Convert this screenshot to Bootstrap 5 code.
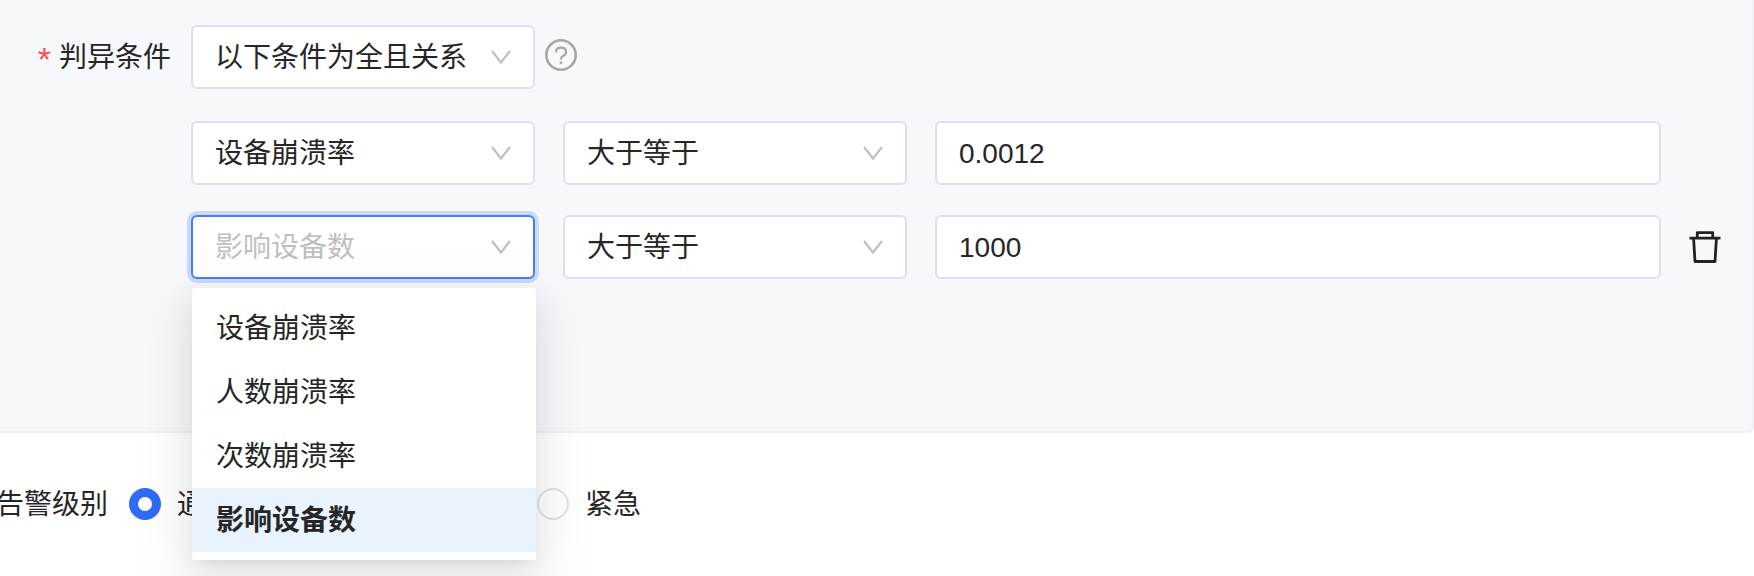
<!DOCTYPE html>
<html lang="zh-CN">
<head>
<meta charset="utf-8">
<meta name="viewport" content="width=device-width, initial-scale=1">
<title>告警条件</title>
<link href="https://cdn.jsdelivr.net/npm/bootstrap@5.3.0/dist/css/bootstrap.min.css" rel="stylesheet">
<style>
  body {
    font-family: "Liberation Sans", "Noto Sans CJK SC", sans-serif;
    font-size: 28px;
    line-height: 44px;
    color: #262626;
    background: #fff;
    min-height: 100vh;
  }
  .rule-panel {
    background: #f6f8fc;
    border: 2px solid #f0f0f0;
    border-width: 0 2px 2px 0;
    border-bottom-right-radius: 6px;
    padding: 25px 31px 152px 0;
  }
  .rule-label { width: 171px; margin-right: 20px; padding-top: 2px; }
  .required-mark { color: #ff4d4f; margin-right: 8px; font-size: 34px; line-height: 28px; vertical-align: -4px; }
  .rule-fields { gap: 28px; }
  .rule-row + .rule-row { margin-top: 30px; }
  .rule-row + .first-rule { margin-top: 32px; }
  .pick-box { flex: 0 0 344px; }
  .rule-panel .form-select,
  .rule-panel .form-control {
    height: 64px;
    padding: 2px 22px 0;
    border: 2px solid #dce2ed;
    border-radius: 6px;
    font-size: 28px;
    line-height: 44px;
    color: #262626;
    background-color: #fff;
  }
  .rule-panel .form-select {
    padding-right: 56px;
    background-image: url("data:image/svg+xml,%3Csvg xmlns='http://www.w3.org/2000/svg' viewBox='0 0 20 14'%3E%3Cpath d='M1 1 10 12.500 19 1' fill='none' stroke='%23bfbfbf' stroke-width='2.200'/%3E%3C/svg%3E");
    background-size: 20px 14px;
    background-position: right 22px center;
  }
  .rule-panel .form-select.is-open {
    color: #bfbfbf;
    border-color: #407fff;
    box-shadow: 0 0 0 4px #ced9f9;
  }
  .help-btn { width: 32px; height: 32px; margin: 14px 0 18px 10px; }
  .trash-slot { flex: 0 0 32px; }
  .trash-slot svg, .help-btn svg { display: block; }
  .pick-menu {
    top: 73px;
    left: 1px;
    width: 100%;
    padding: 8px 0;
    border: 0;
    border-radius: 4px;
    font-size: 28px;
    box-shadow: 0 6px 12px -8px rgba(0,0,0,.12), 0 12px 32px rgba(0,0,0,.08), 0 18px 56px 16px rgba(0,0,0,.05);
  }
  .pick-menu .dropdown-item {
    padding: 11px 24px 9px;
    line-height: 44px;
    color: #262626;
  }
  .pick-menu .dropdown-item.active {
    background: #e8f3fe;
    font-weight: 700;
  }
  .level-row { padding: 48px 0 51px; }
  .level-label { width: 108px; margin-right: 21px; }
  .level-label, .level-option label { padding-top: 2px; }
  .level-option { width: 104px; gap: 16px; }
  .level-options { gap: 304px; }
  .level-option .form-check-input {
    width: 32px;
    height: 32px;
    margin: 0;
    border: 2px solid #dce2ed;
    background-image: none;
  }
  .level-option .form-check-input:checked {
    border: 9px solid #2f6bf6;
    background: #fff;
  }
</style>
</head>
<body>
<form>
  <section class="rule-panel">
    <div class="rule-row d-flex align-items-center">
      <label class="rule-label text-end text-nowrap" for="relation"><span class="required-mark">*</span>判异条件</label>
      <div class="pick-box">
        <select class="form-select" id="relation"><option>以下条件为全且关系</option></select>
      </div>
      <button class="help-btn btn p-0 border-0" type="button" aria-label="帮助">
        <svg width="32" height="32" viewBox="0 0 32 32" fill="none" stroke="#a6a6a8">
          <circle cx="16" cy="16" r="14.700" stroke-width="2.600"/>
          <path d="M11 13.200C11 10.300 13 8.700 16 8.700s5 1.700 5 4.300c0 2.200-1.400 3.400-3.200 4.200-1.200.6-1.800 1.300-1.800 2.500v.9" stroke-width="2.200"/>
          <circle cx="16" cy="23.800" r="1.400" fill="#a6a6a8" stroke="none"/>
        </svg>
      </button>
    </div>

    <div class="rule-row first-rule d-flex">
      <div class="rule-label"></div>
      <div class="rule-fields d-flex align-items-center flex-grow-1">
        <div class="pick-box"><select class="form-select" aria-label="指标"><option>设备崩溃率</option></select></div>
        <div class="pick-box"><select class="form-select" aria-label="比较"><option>大于等于</option></select></div>
        <input class="form-control flex-fill" type="text" value="0.0012" aria-label="阈值">
        <div class="trash-slot"></div>
      </div>
    </div>

    <div class="rule-row d-flex">
      <div class="rule-label"></div>
      <div class="rule-fields d-flex align-items-center flex-grow-1">
        <div class="pick-box position-relative">
          <select class="form-select is-open" aria-label="指标"><option>影响设备数</option></select>
          <div class="dropdown-menu pick-menu show">
            <button class="dropdown-item" type="button">设备崩溃率</button>
            <button class="dropdown-item" type="button">人数崩溃率</button>
            <button class="dropdown-item" type="button">次数崩溃率</button>
            <button class="dropdown-item active" type="button">影响设备数</button>
          </div>
        </div>
        <div class="pick-box"><select class="form-select" aria-label="比较"><option>大于等于</option></select></div>
        <input class="form-control flex-fill" type="text" value="1000" aria-label="阈值">
        <button class="trash-slot btn p-0 border-0" type="button" aria-label="删除">
          <svg width="32" height="32" viewBox="0 0 32 32" fill="none" stroke="#222" stroke-width="2.800" stroke-linejoin="round">
            <path d="M.500 7.200h31M8.300 7V1.700h15.400V7M4.600 7.500l1.400 23h20l1.400-23"/>
          </svg>
        </button>
      </div>
    </div>
  </section>

  <div class="level-row d-flex align-items-center">
    <div class="level-label d-flex justify-content-end text-nowrap" id="levelLabel">告警级别</div>
    <div class="level-options d-flex" role="radiogroup" aria-labelledby="levelLabel">
      <div class="level-option d-flex align-items-center">
        <input class="form-check-input" type="radio" name="level" id="lvNotice" checked>
        <label class="text-nowrap" for="lvNotice">通知</label>
      </div>
      <div class="level-option d-flex align-items-center">
        <input class="form-check-input" type="radio" name="level" id="lvUrgent">
        <label class="text-nowrap" for="lvUrgent">紧急</label>
      </div>
    </div>
  </div>
</form>
<script src="https://cdn.jsdelivr.net/npm/bootstrap@5.3.0/dist/js/bootstrap.bundle.min.js"></script>
</body>
</html>
